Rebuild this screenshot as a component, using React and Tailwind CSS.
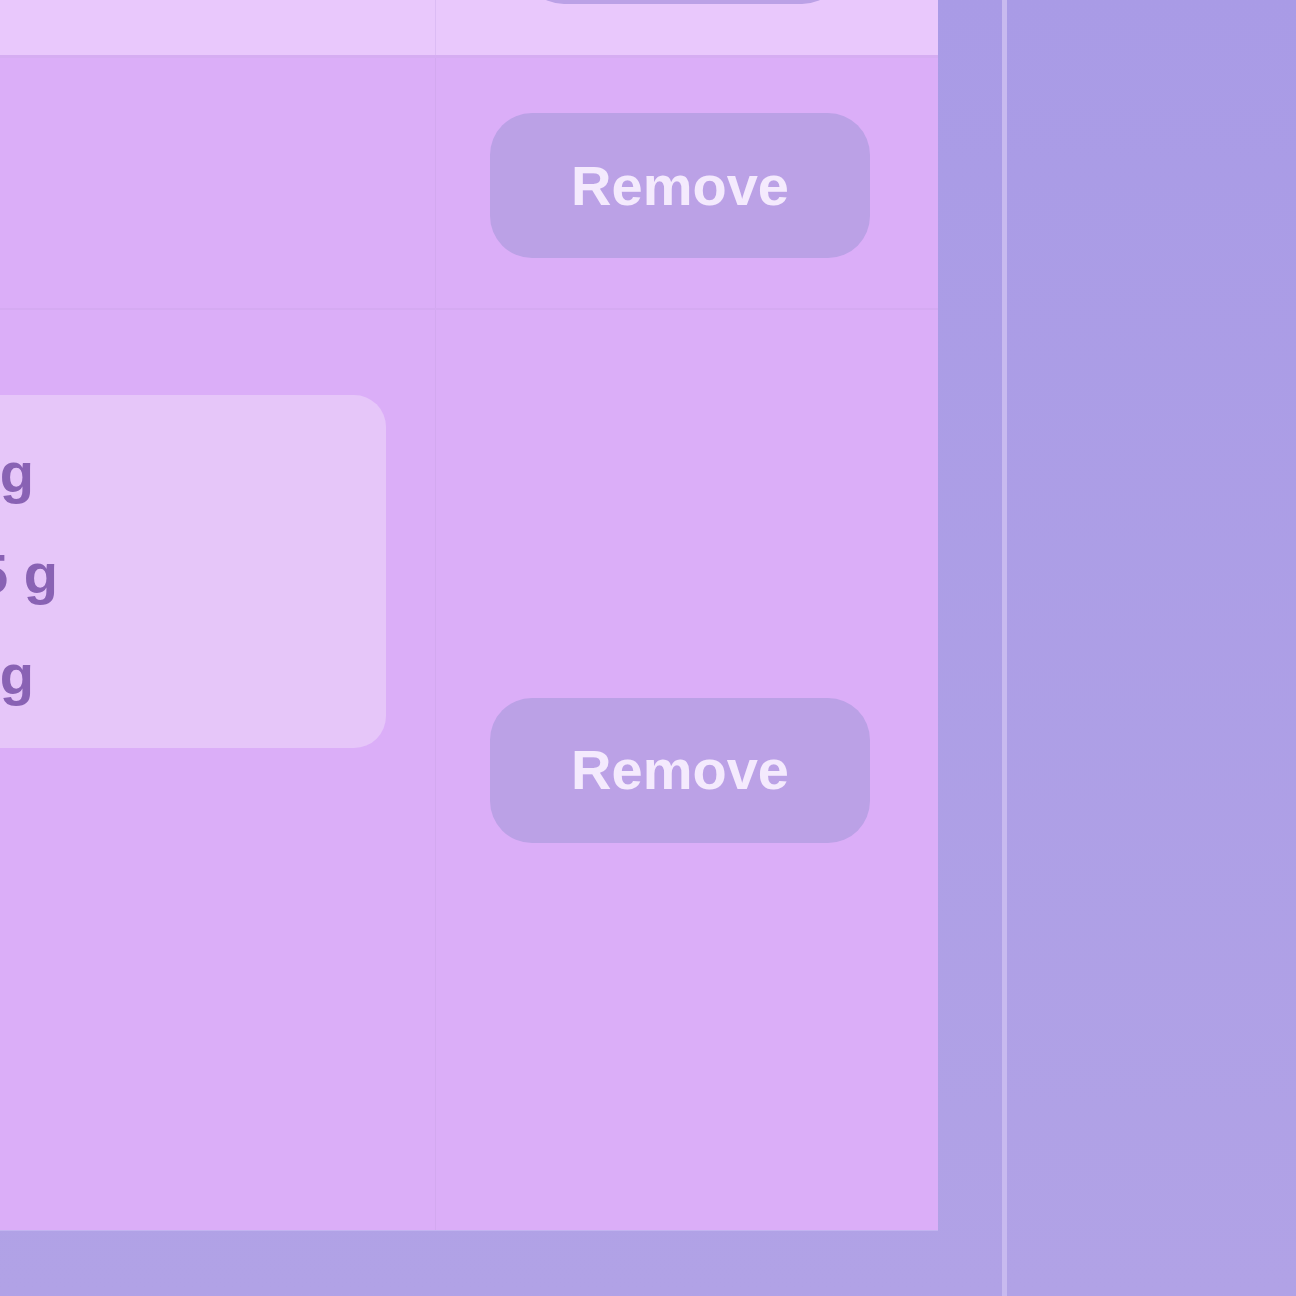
import React from 'react';

const RemoveButton = () => (
    <button className="w-[380px] h-[145px] rounded-[42px] bg-[#bba1e6] text-[#f4eafd] text-[56px] font-bold flex items-center justify-center">
        Remove
    </button>
);

export default function App() {
    const macros = [
        { label: 'Protein: 24 g', end: 'w-[34px]' },
        { label: 'Carbs: 45 g', end: 'w-[58px]' },
        { label: 'Fat: 12 g', end: 'w-[34px]' },
    ];

    return (
        <div className="w-[1296px] h-[1296px] overflow-hidden flex bg-gradient-to-b from-[#a99be6] to-[#b1a2e6]" style={{ fontFamily: '"Liberation Sans", Arial, sans-serif' }}>
            {/* Table panel */}
            <div className="w-[938px] h-[1231px] shrink-0 flex flex-col bg-[#dbaef8] border-b border-[#c3b3f0] overflow-hidden">
                {/* Header row */}
                <div className="h-[58px] shrink-0 flex bg-[#e9c8fc] border-b-[3px] border-[#d6adf2]">
                    <div className="w-[436px] shrink-0 border-r border-[#dcbcf4]" />
                    <div className="flex-1 overflow-hidden">
                        <div className="ml-[86px] -mt-[141px] w-[322px] h-[145px] rounded-[42px] bg-[#bba1e6]" />
                    </div>
                </div>

                {/* Row 1 */}
                <div className="h-[252px] shrink-0 flex border-b-2 border-[#d5aaf2]">
                    <div className="w-[436px] shrink-0 border-r border-[#d3a9f0]" />
                    <div className="flex-1 flex items-center pl-[54px] pt-[5px]">
                        <RemoveButton />
                    </div>
                </div>

                {/* Row 2 */}
                <div className="flex-1 flex">
                    <div className="w-[436px] shrink-0 border-r border-[#d3a9f0] pt-[85px]">
                        <div className="w-[386px] h-[353px] rounded-r-[32px] bg-[#e6c6f9] pt-[27px] flex flex-col">
                            {macros.map((m) => (
                                <div key={m.label} className={`${m.end} h-[101px] flex justify-end`}>
                                    <span className="shrink-0 whitespace-nowrap text-[56px] leading-[101px] font-bold text-[#8962b4]">
                                        {m.label}
                                    </span>
                                </div>
                            ))}
                        </div>
                    </div>
                    <div className="flex-1 flex items-center pl-[54px]">
                        <RemoveButton />
                    </div>
                </div>
            </div>

            {/* Side gutter */}
            <div className="w-[64px] shrink-0" />
            <div className="w-[5px] shrink-0 bg-[#c8baef]" />
            <div className="flex-1" />
        </div>
    );
}
